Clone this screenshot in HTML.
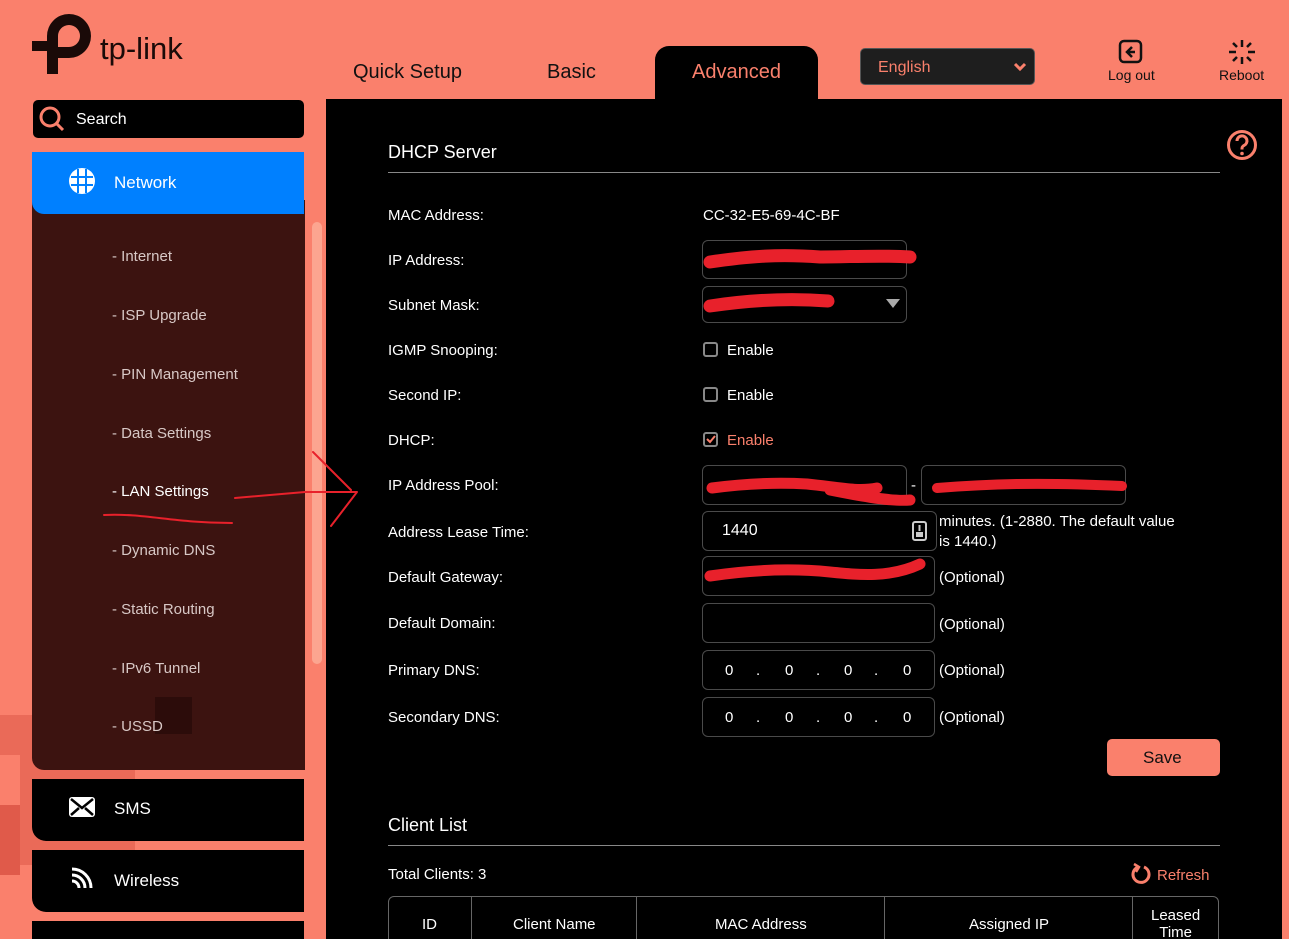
<!DOCTYPE html>
<html><head><meta charset="utf-8"><style>
*{box-sizing:border-box;margin:0;padding:0}
html,body{width:1289px;height:939px;overflow:hidden}
body{background:#fa806c;font-family:"Liberation Sans",sans-serif;position:relative;color:#fff}
.a{position:absolute}
.lbl{position:absolute;left:388px;font-size:15px;color:#fff}
.box{position:absolute;border:1px solid #4a4a4a;border-radius:6px;background:#000}
.sub{position:absolute;left:112px;font-size:15px;color:#d8c8c6}
.t{position:absolute;font-size:15px;color:#fff}
.nav{position:absolute;left:32px;width:272px;background:#000;border-radius:0 0 0 14px}
.cb{position:absolute;width:15px;height:15px;border:2px solid #888;border-radius:3px}
</style></head><body>
<div class="a" style="left:0;top:715px;width:35px;height:40px;background:#ea6a58"></div>
<div class="a" style="left:20px;top:755px;width:115px;height:110px;background:#ea6a58"></div>
<div class="a" style="left:0;top:805px;width:20px;height:70px;background:#e05a4a"></div>
<!-- logo -->
<svg class="a" style="left:30px;top:12px" width="170" height="64" viewBox="0 0 170 64">
<path d="M17 62V39H2V29h15V24A22 22 0 1 1 39 46H28v16z M28 35h11a11 11 0 1 0-11-11z" fill="#1a0a08" fill-rule="evenodd"/>
<text x="70" y="47" font-family="Liberation Sans" font-size="31" fill="#1a0a08">tp-link</text>
</svg>
<div class="t" style="left:353px;top:61px;font-size:20px;color:#111">Quick Setup</div>
<div class="t" style="left:547px;top:61px;font-size:20px;color:#111">Basic</div>
<div class="a" style="left:655px;top:46px;width:163px;height:60px;background:#000;border-radius:14px 14px 0 0"></div>
<div class="t" style="left:692px;top:61px;font-size:20px;color:#fa806c">Advanced</div>
<div class="a" style="left:860px;top:48px;width:175px;height:37px;background:#1e1e1e;border:1px solid #555;border-radius:5px"></div>
<div class="t" style="left:878px;top:59px;font-size:16px;color:#fa806c">English</div>
<svg class="a" style="left:1013px;top:62px" width="14" height="10"><path d="M2 2l5 5 5-5" stroke="#fa806c" stroke-width="3" fill="none"/></svg>
<svg class="a" style="left:1118px;top:39px" width="26" height="26"><rect x="2" y="2" width="21" height="21" rx="4" fill="none" stroke="#111" stroke-width="2.5"/><path d="M14 8l-5 5 5 5M9 13h8" stroke="#111" stroke-width="2.5" fill="none"/></svg>
<div class="t" style="left:1108px;top:67px;font-size:14px;color:#111">Log out</div>
<svg class="a" style="left:1228px;top:39px" width="28" height="26"><g stroke="#111" stroke-width="2.5"><path d="M14 1v7M14 18v7M1 13h7M20 13h7M5 4l4 4M19 18l4 4M23 4l-4 4M9 18l-4 4"/></g></svg>
<div class="t" style="left:1219px;top:67px;font-size:14px;color:#111">Reboot</div>
<!-- sidebar -->
<div class="a" style="left:33px;top:100px;width:271px;height:38px;background:#000;border-radius:5px"></div>
<svg class="a" style="left:38px;top:105px" width="28" height="28"><circle cx="12" cy="12" r="9" stroke="#fa806c" stroke-width="3" fill="none"/><path d="M18 18l7 7" stroke="#fa806c" stroke-width="3"/></svg>
<div class="t" style="left:76px;top:111px;font-size:16px">Search</div>
<div class="a" style="left:32px;top:200px;width:273px;height:570px;background:#3c1310;border-radius:0 0 0 12px"></div>
<div class="a" style="left:32px;top:152px;width:272px;height:62px;background:#0080ff;border-radius:0 0 0 12px"></div>
<svg class="a" style="left:68px;top:167px" width="28" height="28"><circle cx="14" cy="14" r="13" fill="#fff"/><g stroke="#0080ff" stroke-width="2"><path d="M3 10h22M3 18h22M10 2v24M18 2v24"/></g></svg>
<div class="t" style="left:114px;top:173px;font-size:17px">Network</div>
<div class="sub" style="top:248px">- Internet</div>
<div class="sub" style="top:307px">- ISP Upgrade</div>
<div class="sub" style="top:366px">- PIN Management</div>
<div class="sub" style="top:425px">- Data Settings</div>
<div class="sub" style="top:483px;color:#fff">- LAN Settings</div>
<div class="sub" style="top:542px">- Dynamic DNS</div>
<div class="sub" style="top:601px">- Static Routing</div>
<div class="sub" style="top:660px">- IPv6 Tunnel</div>
<div class="a" style="left:155px;top:697px;width:37px;height:37px;background:#2c0c0a"></div>
<div class="sub" style="top:718px">- USSD</div>
<div class="a" style="left:312px;top:222px;width:10px;height:442px;background:#fca590;border-radius:5px"></div>
<div class="nav" style="top:779px;height:62px"></div>
<svg class="a" style="left:68px;top:796px" width="28" height="22"><rect x="1" y="1" width="26" height="20" rx="3" fill="#fff"/><path d="M3 3l11 9 11-9M3 19l8-7M25 19l-8-7" stroke="#000" stroke-width="2.5" fill="none"/></svg>
<div class="t" style="left:114px;top:799px;font-size:17px">SMS</div>
<div class="nav" style="top:850px;height:62px"></div>
<svg class="a" style="left:70px;top:866px" width="24" height="24"><g stroke="#fff" stroke-width="3" fill="none"><path d="M2 3a19 19 0 0 1 19 19M2 9a13 13 0 0 1 13 13M2 15a7 7 0 0 1 7 7"/></g></svg>
<div class="t" style="left:114px;top:871px;font-size:17px">Wireless</div>
<div class="nav" style="top:921px;height:30px;border-radius:0"></div>
<!-- content -->
<div class="a" style="left:326px;top:99px;width:956px;height:840px;background:#000"></div>
<div class="t" style="left:388px;top:142px;font-size:18px">DHCP Server</div>
<svg class="a" style="left:1226px;top:129px" width="32" height="32"><circle cx="16" cy="16" r="13.5" stroke="#fa806c" stroke-width="3" fill="none"/><path d="M11 12a5 5 0 1 1 7 4.5c-2 1-2 2-2 4" stroke="#fa806c" stroke-width="3" fill="none"/><circle cx="16" cy="24.5" r="1.8" fill="#fa806c"/></svg>
<div class="a" style="left:388px;top:172px;width:832px;height:1px;background:#888"></div>
<div class="lbl" style="top:207px">MAC Address:</div><div class="t" style="left:703px;top:207px">CC-32-E5-69-4C-BF</div>
<div class="lbl" style="top:252px">IP Address:</div><div class="box" style="left:702px;top:240px;width:205px;height:39px"></div>
<div class="lbl" style="top:297px">Subnet Mask:</div><div class="box" style="left:702px;top:286px;width:205px;height:37px"></div>
<svg class="a" style="left:886px;top:299px" width="14" height="10"><path d="M0 0h14L7 9z" fill="#aaa"/></svg>
<div class="lbl" style="top:342px">IGMP Snooping:</div><div class="cb" style="left:703px;top:342px"></div><div class="t" style="left:727px;top:342px">Enable</div>
<div class="lbl" style="top:387px">Second IP:</div><div class="cb" style="left:703px;top:387px"></div><div class="t" style="left:727px;top:387px">Enable</div>
<div class="lbl" style="top:432px">DHCP:</div><div class="cb" style="left:703px;top:432px"></div>
<svg class="a" style="left:706px;top:435px" width="10" height="9"><path d="M1 4l3 3 5-6" stroke="#fa806c" stroke-width="2" fill="none"/></svg>
<div class="t" style="left:727px;top:432px;color:#fa806c">Enable</div>
<div class="lbl" style="top:477px">IP Address Pool:</div>
<div class="box" style="left:702px;top:465px;width:205px;height:40px"></div>
<div class="t" style="left:911px;top:477px">-</div>
<div class="box" style="left:921px;top:465px;width:205px;height:40px"></div>
<div class="lbl" style="top:524px">Address Lease Time:</div>
<div class="box" style="left:702px;top:511px;width:235px;height:40px"></div>
<div class="t" style="left:722px;top:522px;font-size:16px">1440</div>
<svg class="a" style="left:912px;top:521px" width="15" height="20"><rect x="1" y="1" width="13" height="18" rx="2" fill="none" stroke="#ccc" stroke-width="2"/><rect x="4" y="11" width="7" height="5" fill="#ccc"/><path d="M7.5 4v6" stroke="#ccc" stroke-width="2"/></svg>
<div class="t" style="left:939px;top:512px;line-height:20px;width:250px">minutes. (1-2880. The default value is 1440.)</div>
<div class="lbl" style="top:569px">Default Gateway:</div><div class="box" style="left:702px;top:556px;width:233px;height:40px"></div><div class="t" style="left:939px;top:569px">(Optional)</div>
<div class="lbl" style="top:615px">Default Domain:</div><div class="box" style="left:702px;top:603px;width:233px;height:40px"></div><div class="t" style="left:939px;top:616px">(Optional)</div>
<div class="lbl" style="top:662px">Primary DNS:</div><div class="box" style="left:702px;top:650px;width:233px;height:40px"></div>
<div class="t" style="left:725px;top:662px">0</div><div class="t" style="left:756px;top:662px">.</div><div class="t" style="left:785px;top:662px">0</div><div class="t" style="left:816px;top:662px">.</div><div class="t" style="left:844px;top:662px">0</div><div class="t" style="left:874px;top:662px">.</div><div class="t" style="left:903px;top:662px">0</div>
<div class="t" style="left:939px;top:662px">(Optional)</div>
<div class="lbl" style="top:709px">Secondary DNS:</div><div class="box" style="left:702px;top:697px;width:233px;height:40px"></div>
<div class="t" style="left:725px;top:709px">0</div><div class="t" style="left:756px;top:709px">.</div><div class="t" style="left:785px;top:709px">0</div><div class="t" style="left:816px;top:709px">.</div><div class="t" style="left:844px;top:709px">0</div><div class="t" style="left:874px;top:709px">.</div><div class="t" style="left:903px;top:709px">0</div>
<div class="t" style="left:939px;top:709px">(Optional)</div>
<div class="a" style="left:1107px;top:739px;width:113px;height:37px;background:#fa806c;border-radius:5px"></div>
<div class="t" style="left:1143px;top:748px;font-size:17px;color:#111">Save</div>
<div class="t" style="left:388px;top:815px;font-size:18px">Client List</div>
<div class="a" style="left:388px;top:845px;width:832px;height:1px;background:#888"></div>
<div class="t" style="left:388px;top:866px">Total Clients: 3</div>
<svg class="a" style="left:1130px;top:862px" width="22" height="24"><path d="M8 5a8 8 0 1 0 6 0" stroke="#fa806c" stroke-width="3" fill="none"/><path d="M4 2l5 3-3 5" stroke="#fa806c" stroke-width="2.5" fill="none"/></svg>
<div class="t" style="left:1157px;top:867px;color:#fa806c">Refresh</div>
<div class="a" style="left:388px;top:896px;width:831px;height:60px;border:1px solid #666;border-radius:6px 6px 0 0"></div>
<div class="a" style="left:471px;top:896px;width:1px;height:45px;background:#666"></div>
<div class="a" style="left:636px;top:896px;width:1px;height:45px;background:#666"></div>
<div class="a" style="left:884px;top:896px;width:1px;height:45px;background:#666"></div>
<div class="a" style="left:1132px;top:896px;width:1px;height:45px;background:#666"></div>
<div class="t" style="left:422px;top:916px">ID</div>
<div class="t" style="left:513px;top:916px">Client Name</div>
<div class="t" style="left:715px;top:916px">MAC Address</div>
<div class="t" style="left:969px;top:916px">Assigned IP</div>
<div class="t" style="left:1151px;top:907px;text-align:center;line-height:17px">Leased<br>Time</div>
<svg class="a" style="left:0;top:0" width="1289" height="939"><g stroke="#e8212b" fill="none" stroke-linecap="round" stroke-linejoin="round">
<path d="M710 262c40-6 70-8 110-5 30 0 60-2 90 0" stroke-width="13"/>
<path d="M710 306c40-6 80-8 118-5" stroke-width="13"/>
<path d="M712 488c30-4 60-6 95-4 30 3 50 8 70 4 M830 490c20 4 60 12 80 10" stroke-width="11"/>
<path d="M937 488c50-4 100-6 185-2" stroke-width="10"/>
<path d="M710 576c40-6 80-8 120-4 30 3 60 6 90-8" stroke-width="11"/>
<path d="M313 452c10 10 28 28 38 38 M235 498l70-6h52M357 492l-26 34M104 515c40-2 70 8 128 8" stroke-width="2"/>
</g></svg>
</body></html>
